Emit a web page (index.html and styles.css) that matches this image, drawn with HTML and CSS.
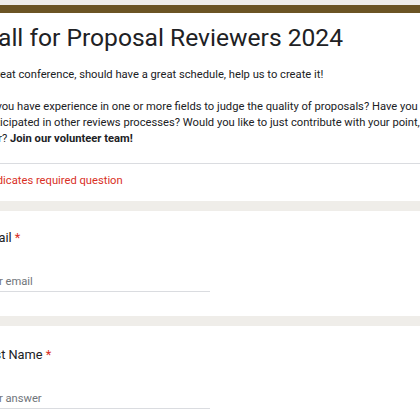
FILE: index.html
```html
<!DOCTYPE html>
<html>
<head>
    <meta charset="utf-8">
    <link rel="stylesheet" href="styles.css">
</head>
<body>
    <div class="form">

        <!-- Header card -->
        <div class="card header">
            <div class="header-body">
                <h1 class="title">Call for Proposal Reviewers 2024</h1>
                <div class="desc">
                    <p>A great conference, should have a great schedule, help us to create it!</p>
                    <p>Do you have experience in one or more fields to judge the quality of proposals? Have you participated in other reviews processes? Would you like to just contribute with your point, peer? <b>Join our volunteer team!</b></p>
                </div>
            </div>
            <div class="required-note">* Indicates required question</div>
        </div>

        <!-- Questions -->
        <div class="card question">
            <div class="label">Email <span class="star">*</span></div>
            <div class="input">Your email</div>
        </div>

        <div class="card question">
            <div class="label">First Name <span class="star">*</span></div>
            <div class="input">Your answer</div>
        </div>

    </div>
</body>
</html>
```

FILE: styles.css
```css
body {
    margin: 0;
    background: #efede9;
    font-family: Roboto, "Liberation Sans", sans-serif;
    color: #202124;
    overflow: hidden;
}

.form {
    width: 480px;
    margin-left: -40px;
    padding-top: 5px;
}

.card {
    background: #fff;
    margin-bottom: 10px;
}

/* Header card */

.header {
    border-top: 8px solid #6b5424;
}

.header-body {
    padding: 8px 20px 16px 20px;
    border-bottom: 1px solid #dadce0;
}

.title {
    font-weight: 400;
    font-size: 24.6px;
    line-height: 34px;
    margin: 0 0 12px 2px;
}

.desc p {
    font-size: 11.2px;
    line-height: 16px;
    margin: 0 0 16px 0;
}

.desc p:last-child {
    margin-bottom: 0;
}

.required-note {
    color: #d93025;
    font-size: 11.2px;
    padding: 10px 20px 14px 20px;
}

/* Question cards */

.question {
    padding: 18px 20px 24px 20px;
}

.question + .question {
    padding-top: 20px;
}

.label {
    font-size: 12.8px;
    line-height: 18px;
}

.star {
    color: #d93025;
}

.input {
    width: 230px;
    margin-top: 28px;
    padding-bottom: 3px;
    font-size: 11.2px;
    color: #70757a;
    border-bottom: 1px solid #dadce0;
}
```
